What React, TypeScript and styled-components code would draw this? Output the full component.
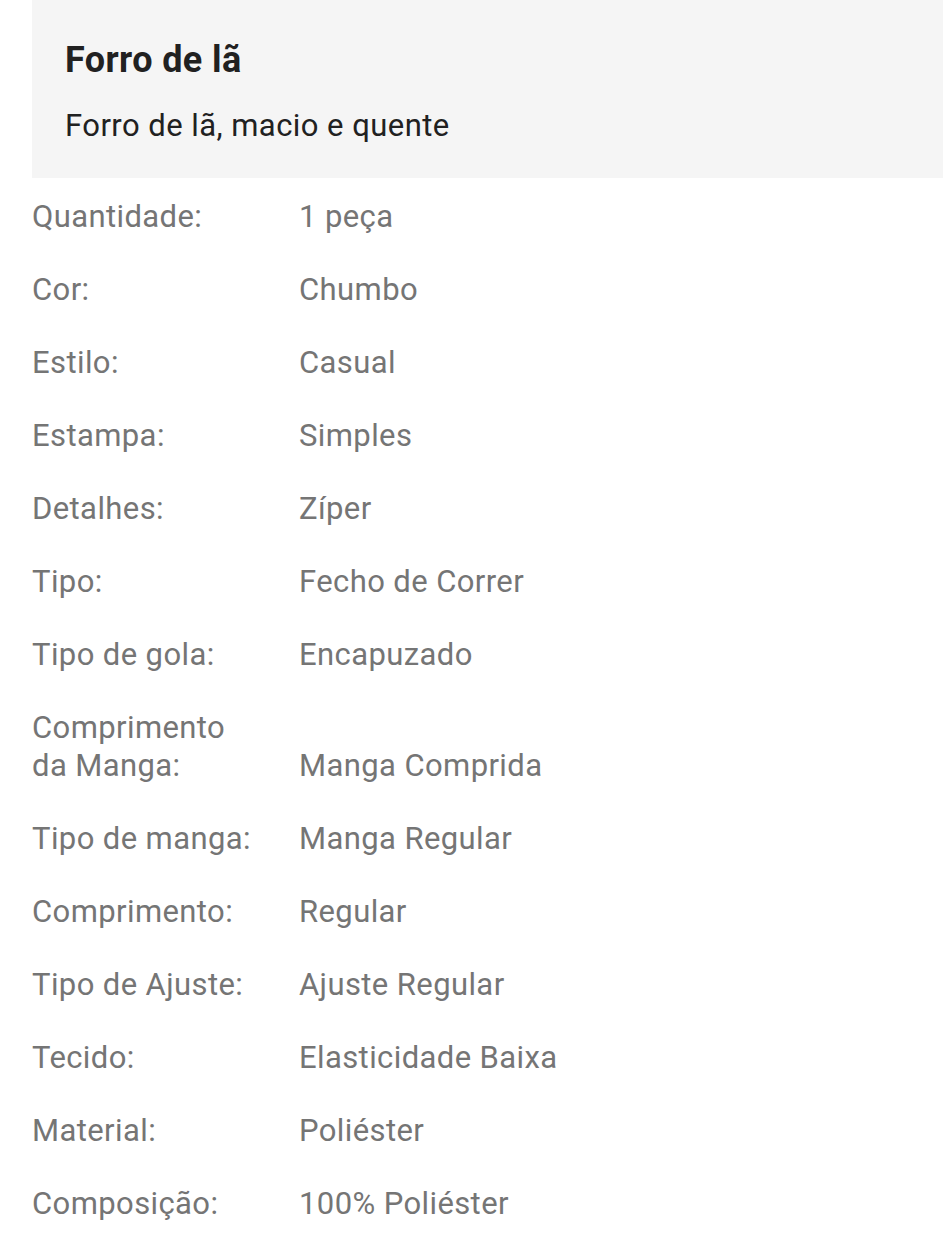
import React from "react";
import styled, { createGlobalStyle } from "styled-components";

const GlobalStyles = createGlobalStyle`
  html, body {
    margin: 0;
    padding: 0;
    background: #fff;
  }
  body {
    font-family: Roboto, "Liberation Sans", sans-serif;
  }
`;

const Page = styled.div`
  padding-left: 32px;
`;

const Header = styled.div`
  background: #f5f5f5;
  padding: 38px 33px 34px;
  height: 178px;
  box-sizing: border-box;
`;

const Title = styled.h2`
  margin: 0;
  font-size: 36px;
  font-weight: 700;
  line-height: 44px;
  letter-spacing: 0.4px;
  color: #212121;
`;

const Subtitle = styled.p`
  margin: 25px 0 0;
  font-size: 31px;
  line-height: 38px;
  letter-spacing: 0.45px;
  color: #212121;
`;

const Specs = styled.dl`
  margin: 20px 0 0;
  display: grid;
  grid-template-columns: 267px 1fr;
  row-gap: 35px;
  align-items: end;
  font-size: 31px;
  line-height: 38px;
  letter-spacing: 0.4px;
  color: #757575;
`;

const Label = styled.dt`
  margin: 0;
  padding-right: 40px;
`;

const Value = styled.dd`
  margin: 0;
`;

const specs: [string, string][] = [
  ["Quantidade:", "1 peça"],
  ["Cor:", "Chumbo"],
  ["Estilo:", "Casual"],
  ["Estampa:", "Simples"],
  ["Detalhes:", "Zíper"],
  ["Tipo:", "Fecho de Correr"],
  ["Tipo de gola:", "Encapuzado"],
  ["Comprimento da Manga:", "Manga Comprida"],
  ["Tipo de manga:", "Manga Regular"],
  ["Comprimento:", "Regular"],
  ["Tipo de Ajuste:", "Ajuste Regular"],
  ["Tecido:", "Elasticidade Baixa"],
  ["Material:", "Poliéster"],
  ["Composição:", "100% Poliéster"],
];

export default function App() {
  return (
    <>
      <GlobalStyles />
      <Page>
        <Header>
          <Title>Forro de lã</Title>
          <Subtitle>Forro de lã, macio e quente</Subtitle>
        </Header>
        <Specs>
          {specs.map(([label, value]) => (
            <React.Fragment key={label}>
              <Label>{label}</Label>
              <Value>{value}</Value>
            </React.Fragment>
          ))}
        </Specs>
      </Page>
    </>
  );
}
